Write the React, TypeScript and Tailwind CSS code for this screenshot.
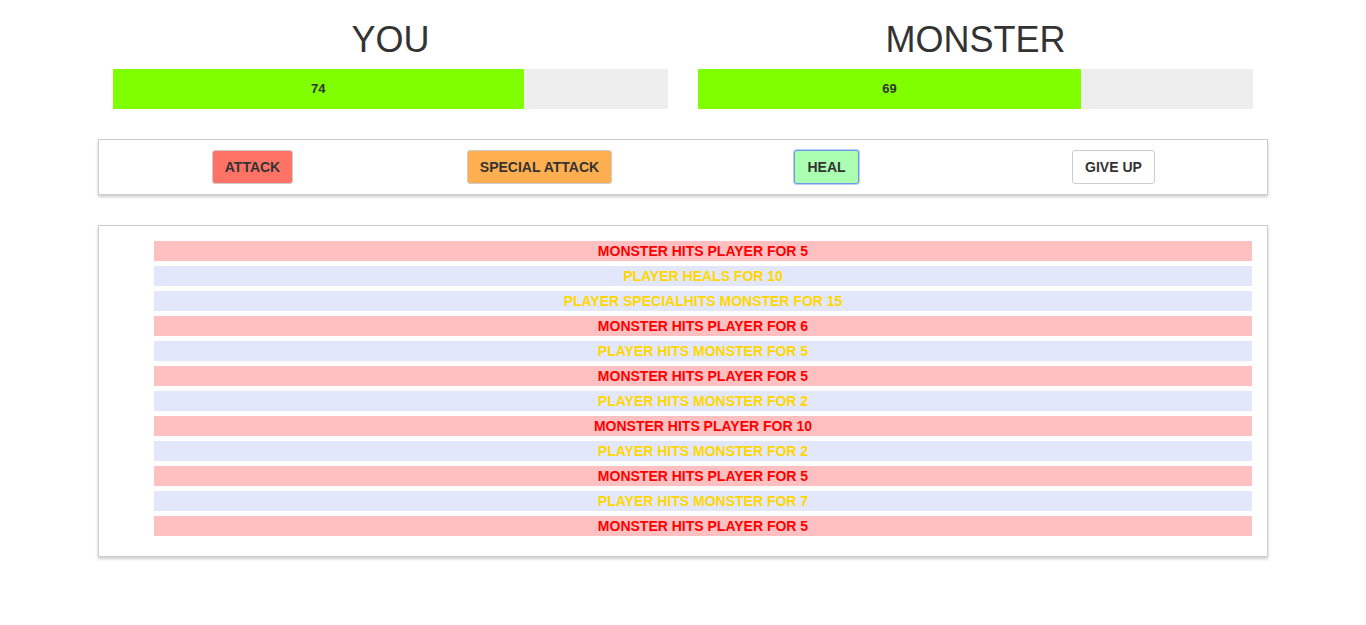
const turns = [
  { isPlayer: false, text: "Monster hits Player for 5" },
  { isPlayer: true, text: "Player heals for 10" },
  { isPlayer: true, text: "Player specialhits Monster for 15" },
  { isPlayer: false, text: "Monster hits Player for 6" },
  { isPlayer: true, text: "Player hits Monster for 5" },
  { isPlayer: false, text: "Monster hits Player for 5" },
  { isPlayer: true, text: "Player hits Monster for 2" },
  { isPlayer: false, text: "Monster hits Player for 10" },
  { isPlayer: true, text: "Player hits Monster for 2" },
  { isPlayer: false, text: "Monster hits Player for 5" },
  { isPlayer: true, text: "Player hits Monster for 7" },
  { isPlayer: false, text: "Monster hits Player for 5" },
];

function HealthBar({ title, health }: { title: string; health: number }) {
  return (
    <div className="w-1/2 px-[15px]">
      <h1 className="mt-[22px] mb-[11px] text-center text-[36px] leading-[36px] font-normal text-[#333]">
        {title}
      </h1>
      <div className="h-[40px] w-full bg-[#eee]">
        <div
          className="flex h-full items-center justify-center bg-[#7fff00] text-[13px] font-bold text-[#333]"
          style={{ width: `${health}%` }}
        >
          {health}
        </div>
      </div>
    </div>
  );
}

export default function App() {
  return (
    <div className="min-h-screen bg-white font-['Liberation_Sans',Arial,sans-serif] text-[#333]">
      <div className="mx-auto w-[1170px]">
        <section className="flex">
          <HealthBar title="YOU" health={74} />
          <HealthBar title="MONSTER" health={69} />
        </section>

        <section className="mt-[30px] border border-[#ccc] px-[10px] py-[10px] shadow-[0_2px_3px_#ccc]">
          <div className="grid grid-cols-4">
            <div className="flex justify-center">
              <button className="rounded-[3px] border border-[#ccc] bg-[#ff7367] px-3 py-[8px] text-[14px] leading-[16px] font-bold uppercase text-[#333]">
                Attack
              </button>
            </div>
            <div className="flex justify-center">
              <button className="rounded-[3px] border border-[#ccc] bg-[#ffaf4f] px-3 py-[8px] text-[14px] leading-[16px] font-bold uppercase text-[#333]">
                Special Attack
              </button>
            </div>
            <div className="flex justify-center">
              <button className="rounded-[3px] border border-[#6f98e8] bg-[#aaffb0] px-3 py-[8px] text-[14px] leading-[16px] font-bold uppercase text-[#333] shadow-[0_0_0_1px_#b9cdf5]">
                Heal
              </button>
            </div>
            <div className="flex justify-center">
              <button className="rounded-[3px] border border-[#ccc] bg-white px-3 py-[8px] text-[14px] leading-[16px] font-bold uppercase text-[#333]">
                Give Up
              </button>
            </div>
          </div>
        </section>

        <section className="mt-[30px] border border-[#ccc] px-[15px] pt-[15px] pb-[20px] shadow-[0_2px_3px_#ccc]">
          <ul className="flex flex-col gap-[5px] pl-[40px]">
            {turns.map((turn, i) => (
              <li
                key={i}
                className={
                  turn.isPlayer
                    ? "h-[20px] bg-[#e3e7fc] text-center text-[14px] leading-[20px] font-bold uppercase text-[#ffd700]"
                    : "h-[20px] bg-[#ffc0c1] text-center text-[14px] leading-[20px] font-bold uppercase text-[#ff0000]"
                }
              >
                {turn.text}
              </li>
            ))}
          </ul>
        </section>
      </div>
    </div>
  );
}
